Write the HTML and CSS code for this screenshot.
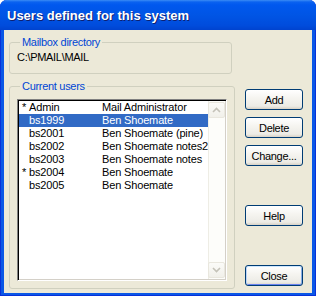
FILE: index.html
```html
<!DOCTYPE html>
<html lang="en">
<head>
    <meta charset="UTF-8">
    <title>Users defined for this system</title>
    <link rel="stylesheet" href="styles.css">
</head>
<body>
<div class="window">
    <div class="titlebar">
        <span class="title">Users defined for this system</span>
    </div>

    <div class="client">
        <div class="groups">
            <!-- Mailbox directory -->
            <fieldset class="group">
                <legend>Mailbox directory</legend>
                <div class="path">C:\PMAIL\MAIL</div>
            </fieldset>

            <!-- User list -->
            <fieldset class="group users">
                <legend>Current users</legend>
                <div class="listbox">
                    <div class="rows" id="userRows"></div>
                    <div class="scrollbar">
                        <div class="sb-button">
                            <svg width="9" height="6" viewBox="0 0 9 6"><polyline points="1,5 4.5,1.5 8,5" fill="none" stroke="#c4c2b8" stroke-width="1.6"/></svg>
                        </div>
                        <div class="sb-track"></div>
                        <div class="sb-button">
                            <svg width="9" height="6" viewBox="0 0 9 6"><polyline points="1,1 4.5,4.5 8,1" fill="none" stroke="#c4c2b8" stroke-width="1.6"/></svg>
                        </div>
                    </div>
                </div>
            </fieldset>
        </div>

        <div class="buttons">
            <button class="btn">Add</button>
            <button class="btn">Delete</button>
            <button class="btn">Change...</button>
            <button class="btn btn-help">Help</button>
            <button class="btn btn-close">Close</button>
        </div>
    </div>
</div>

<script>
// Zoznam pouzivatelov
const users = [
    { star: true,  id: 'Admin',  name: 'Mail Administrator' },
    { star: false, id: 'bs1999', name: 'Ben Shoemate', selected: true },
    { star: false, id: 'bs2001', name: 'Ben Shoemate (pine)' },
    { star: false, id: 'bs2002', name: 'Ben Shoemate notes2' },
    { star: false, id: 'bs2003', name: 'Ben Shoemate notes' },
    { star: true,  id: 'bs2004', name: 'Ben Shoemate' },
    { star: false, id: 'bs2005', name: 'Ben Shoemate' }
];

const rows = document.getElementById('userRows');
users.forEach(user => {
    const row = document.createElement('div');
    row.className = 'row' + (user.selected ? ' selected' : '');
    row.innerHTML = `
        <span class="col-star">${user.star ? '*' : ''}</span>
        <span class="col-id">${user.id}</span>
        <span class="col-name">${user.name}</span>
    `;
    rows.appendChild(row);
});
</script>
</body>
</html>
```

FILE: styles.css
```css
body { margin: 0; font-family: "Liberation Sans", Arial, sans-serif; font-size: 11px; letter-spacing: -0.3px; }
.window { width: 316px; height: 296px; display: flex; flex-direction: column; background: #0a57e6; border-radius: 7px 7px 0 0; overflow: hidden; box-shadow: inset 1px 0 0 #0831d9, inset -1px 0 0 #0831d9, inset 0 -1px 0 #0831d9; }
.titlebar { height: 30px; flex: none; display: flex; align-items: center; padding-left: 7px; background: linear-gradient(to bottom, #3b8cf5 0, #0a62f0 2px, #0058ee 5px, #0055e5 50%, #004cdc 85%, #0043cf 100%); }
.title { color: #fff; font-weight: bold; font-size: 13px; letter-spacing: 0; text-shadow: 1px 1px 0 #0f1f70; margin-top: 1px; }
.client { flex: 1; display: flex; margin: 0 4px 4px; background: #ece9d8; padding: 6px 10px 0 5px; }
.groups { width: 223px; }
.group { margin: 0; border: 1px solid #d0d0bf; border-radius: 3px; padding: 2px 7px 9px; }
.group legend { color: #0046d5; padding: 0 2px; margin-left: 3px; line-height: 13px; }
.path { line-height: 13px; color: #000; }
.users { margin-top: 6px; padding: 6px 7px 7px; }
.listbox { height: 182px; box-sizing: border-box; display: flex; background: #fff; border-top: 1px solid #808080; border-left: 1px solid #808080; border-right: 1px solid #fff; border-bottom: 1px solid #fff; box-shadow: inset 1px 1px 0 #000, inset -1px -1px 0 #d4d0c8; padding: 1px; }
.rows { flex: 1; overflow: hidden; }
.row { display: flex; height: 13px; line-height: 13px; white-space: nowrap; overflow: hidden; color: #000; letter-spacing: -0.15px; }
.row.selected { background: #316ac5; color: #fff; }
.col-star { width: 7px; padding-left: 3px; flex: none; }
.col-id { width: 73px; flex: none; }
.col-name { flex: 1; overflow: hidden; }
.scrollbar { width: 17px; display: flex; flex-direction: column; background: #fdfdfa; box-shadow: inset 1px 0 0 #eeede5; }
.sb-button { height: 16px; margin: 1px 0; display: flex; align-items: center; justify-content: center; border: 1px solid #e9e7de; border-radius: 2px; background: linear-gradient(to bottom, #fbfbf8, #f1f0ea); box-sizing: border-box; }
.sb-track { flex: 1; }
.buttons { display: flex; flex-direction: column; margin-left: 13px; padding-top: 53px; }
.btn { width: 58px; height: 21px; margin-bottom: 7px; padding: 0; font-family: "Liberation Sans", Arial, sans-serif; font-size: 11px; letter-spacing: -0.3px; color: #000; border: 1px solid #003c74; border-radius: 3px; background: linear-gradient(to bottom, #ffffff 0, #f6f5f1 40%, #ecebe5 85%, #d8d2c6 100%); }
.btn-help { margin-top: 32px; }
.btn-close { margin-top: 32px; box-shadow: inset 0 1px 0 #cee7ff, inset 1px 0 0 #bcd4f6, inset -1px 0 0 #89ade4, inset 0 -1px 0 #6982ee; }
```
